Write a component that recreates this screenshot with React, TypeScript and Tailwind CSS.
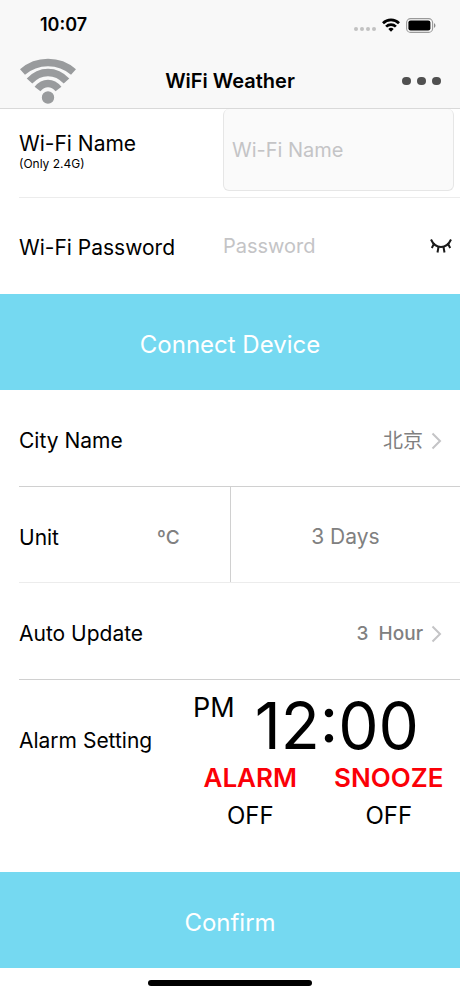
import React, { useState } from 'react';

const Chevron = () => (
  <svg width="11" height="18" viewBox="0 0 11 18" fill="none" stroke="#c4c4c6" strokeWidth="2" aria-hidden>
    <path d="M1.5 1.5 9 9l-7.500 7.500" />
  </svg>
);

const StatusIcons = () => (
  <div className="flex items-center gap-1.5" aria-hidden>
    <div className="flex gap-0.5 pt-2">
      <span className="size-1 rounded-xs bg-[#c2c2c2]" />
      <span className="size-1 rounded-xs bg-[#c2c2c2]" />
      <span className="size-1 rounded-xs bg-[#c2c2c2]" />
      <span className="size-1 rounded-xs bg-[#c2c2c2]" />
    </div>
    <svg width="18" height="14" viewBox="0 0 18 14" fill="none" stroke="#000" strokeWidth="2.700">
      <path d="M1 5.200a11.400 11.400 0 0 1 16 0" />
      <path d="M4.100 8.600a7 7 0 0 1 9.800 0" />
      <path d="M9 13.800 6.300 11.100a3.900 3.900 0 0 1 5.400 0z" fill="#000" stroke="none" />
    </svg>
    <svg width="30" height="15" viewBox="0 0 30 15">
      <rect x="0.600" y="0.600" width="26" height="13.800" rx="4" fill="none" stroke="#9a9a9a" strokeWidth="1.100" />
      <rect x="2.400" y="2.400" width="22" height="10" rx="2.200" fill="#000" />
      <path d="M28 5.200c1.900.7 1.900 3.900 0 4.600z" fill="#8a8a8a" />
    </svg>
  </div>
);

const WifiLogo = () => (
  <svg width="58" height="46" viewBox="0 0 58 46" fill="none" stroke="#999b9d" strokeWidth="7.500" aria-hidden>
    <path d="M3.500 14C18 1.300 40 1.300 54.500 14" />
    <path d="M10.500 23C21 11.500 37 11.500 47.500 23" />
    <path d="M18.500 31c6-7.500 15-7.500 21 0" />
    <circle cx="29" cy="39.500" r="6.800" fill="#999b9d" stroke="#f8f8f8" strokeWidth="1.200" />
  </svg>
);

const ClosedEye = () => (
  <svg width="22" height="16" viewBox="0 0 22 16" fill="none" stroke="#1a1a1a" strokeWidth="2" aria-hidden>
    <path d="M1 1.500c4.500 10 15.500 10 20 0" />
    <path d="M4.300 5.300 1.800 10M8.600 8.500 7.500 14.500M13.400 8.500l1.100 6M17.700 5.300 20.200 10" />
  </svg>
);

const App: React.FC = () => {
  const [name, setName] = useState('');
  const [password, setPassword] = useState('');
  const [visible, setVisible] = useState(false);
  const [unit, setUnit] = useState('ºC');
  const [alarm, setAlarm] = useState(false);
  const [snooze, setSnooze] = useState(false);

  return (
    <div className="min-h-screen bg-white text-black text-[21px] leading-7 font-['Inter','Noto_Sans_CJK_SC',sans-serif]">
      <header className="bg-[#f8f8f8] border-b border-[#d9d9d9]">
        <div className="h-12 pt-0.5 pl-10 pr-6 flex items-center justify-between">
          <span className="text-lg font-semibold">10:07</span>
          <StatusIcons />
        </div>
        <div className="h-15 pt-1.5 px-[19px] grid grid-cols-[1fr_auto_1fr] items-center">
          <a href="#wifi" aria-label="Wi-Fi"><WifiLogo /></a>
          <h1 className="text-xl font-semibold">WiFi Weather</h1>
          <button aria-label="More" className="justify-self-end flex gap-1.5">
            <span className="w-[9px] h-2 rounded-full bg-[#505050]" />
            <span className="w-[9px] h-2 rounded-full bg-[#505050]" />
            <span className="w-[9px] h-2 rounded-full bg-[#505050]" />
          </button>
        </div>
      </header>

      <main>
        <div className="ml-[19px] h-[89px] flex border-b border-[#ececec]">
          <label htmlFor="wifi-name" className="flex-1 pt-[21px]">
            <span className="block">Wi-Fi Name</span>
            <span className="block text-xs leading-3">(Only 2.4G)</span>
          </label>
          <input
            id="wifi-name"
            value={name}
            onChange={e => setName(e.target.value)}
            placeholder="Wi-Fi Name"
            className="w-[231px] h-[82px] mr-1.5 px-2 rounded-md border border-t-0 border-[#e6e6e6] bg-[#fafafa] text-xl placeholder:text-[#c4c4c6]"
          />
        </div>
        <div className="ml-[19px] h-24 flex items-center">
          <label htmlFor="wifi-password" className="flex-1 pt-1">Wi-Fi Password</label>
          <div className="w-[237px] pr-2 flex items-center">
            <input
              id="wifi-password"
              type={visible ? 'text' : 'password'}
              value={password}
              onChange={e => setPassword(e.target.value)}
              placeholder="Password"
              className="flex-1 min-w-0 text-xl placeholder:text-[#c4c4c6]"
            />
            <button aria-label="Show password" onClick={() => setVisible(!visible)}><ClosedEye /></button>
          </div>
        </div>
        <button className="w-full h-24 pt-1.5 bg-[#75d9f1] text-white text-2xl">Connect Device</button>

        <button className="ml-[19px] pr-[18px] pt-1.5 h-[97px] w-[calc(100%-19px)] flex items-center border-b border-[#d0d0d0]">
          <span className="flex-1 text-left">City Name</span>
          <span className="mr-2 text-xl text-[#808080]">北京</span>
          <Chevron />
        </button>
        <div className="ml-[19px] h-24 flex border-b border-[#ececec]">
          <button
            onClick={() => setUnit(unit === 'ºC' ? 'ºF' : 'ºC')}
            className="w-[48%] pt-1.5 pr-[50px] flex items-center justify-between border-r border-[#d0d0d0]"
          >
            <span>Unit</span>
            <span className="text-[19px] font-medium text-[#808080]">{unit}</span>
          </button>
          <button className="flex-1 pt-1 text-[#808080]">3 Days</button>
        </div>
        <button className="ml-[19px] pr-[18px] pt-1.5 h-[97px] w-[calc(100%-19px)] flex items-center border-b border-[#d0d0d0]">
          <span className="flex-1 text-left">Auto Update</span>
          <span className="mr-2 text-[19px] font-medium text-[#808080] whitespace-pre">3  Hour</span>
          <Chevron />
        </button>

        <div className="ml-[19px] h-48 flex">
          <div className="flex-1 pt-[47px]">Alarm Setting</div>
          <div className="w-[277px] mr-0.5">
            <button className="w-full h-20 pl-3 pt-3 flex items-start gap-5">
              <span className="text-[27px] leading-8">PM</span>
              <span className="text-[64px] leading-[68px]">12:00</span>
            </button>
            <div className="grid grid-cols-2 text-center">
              <button onClick={() => setAlarm(!alarm)}>
                <span className="block text-[26px] leading-9 font-semibold text-[#fb0007]">ALARM</span>
                <span className="block text-2xl leading-10">{alarm ? 'ON' : 'OFF'}</span>
              </button>
              <button onClick={() => setSnooze(!snooze)}>
                <span className="block text-[26px] leading-9 font-semibold text-[#fb0007]">SNOOZE</span>
                <span className="block text-2xl leading-10">{snooze ? 'ON' : 'OFF'}</span>
              </button>
            </div>
          </div>
        </div>
        <button className="w-full h-24 pt-1.5 bg-[#75d9f1] text-white text-2xl">Confirm</button>
      </main>

      <div className="mt-3 mx-auto w-[164px] h-1.5 rounded-full bg-black" />
    </div>
  );
};

export default App;
